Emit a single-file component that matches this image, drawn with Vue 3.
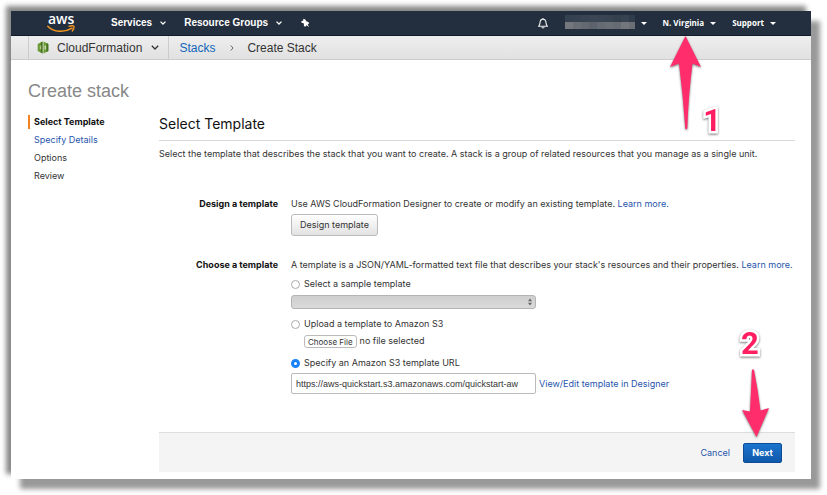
<script setup>
import { ref } from 'vue'

const steps = [
  { label: 'Select Template', state: 'current' },
  { label: 'Specify Details', state: 'link' },
  { label: 'Options', state: 'plain' },
  { label: 'Review', state: 'plain' },
]
const source = ref('url')
const templateUrl = ref('https://aws-quickstart.s3.amazonaws.com/quickstart-aw')
const topRow = ['#344151', '#36424f', '#384453', '#3b4655', '#3a4553', '#394452', '#35404f', '#384351', '#303c4b']
const lowRow = ['#74777c', '#6a6f76', '#656a72', '#5c636c', '#666b73', '#6a6e75', '#666b73', '#73767b', '#6a6e75']
</script>

<template>
  <div class="page">
    <div class="window">
      <header class="topbar">
        <a href="#" class="logo" aria-label="AWS home">
          <span class="logo-word">aws</span>
          <svg class="smile" viewBox="0 0 28 8" aria-hidden="true">
            <path d="M0.8 1.2 C7 7.6 17.500 7.800 25 3.200" fill="none" stroke="#f7981f" stroke-width="1.500" stroke-linecap="round" />
            <path d="M22 1.400 C24 0.700 26 0.600 26.800 1.200 C27.300 2.200 26.600 4.400 25.300 6" fill="none" stroke="#f7981f" stroke-width="1.300" stroke-linecap="round" />
          </svg>
        </a>
        <nav class="menus">
          <button type="button" class="menu">Services
            <svg class="chev" viewBox="0 0 6 4" aria-hidden="true"><path d="M0.500 0.600 L3 3 L5.500 0.600" /></svg>
          </button>
          <button type="button" class="menu">Resource Groups
            <svg class="chev" viewBox="0 0 6 4" aria-hidden="true"><path d="M0.500 0.600 L3 3 L5.500 0.600" /></svg>
          </button>
          <button type="button" class="menu pin" aria-label="Pin">
            <svg viewBox="0 0 10 10" aria-hidden="true"><path d="M3.400 0.800 L5.300 1.500 L6.300 3.300 L8.800 4.300 L8.900 5.800 L7.700 6.200 L9 9 L6.400 7.300 L5.400 8.700 L3.900 8 L3.900 5.600 L1.300 4.600 L1.200 3.400 L3.200 2.600 Z" fill="#fff" /></svg>
          </button>
        </nav>
        <div class="account">
          <button type="button" class="bell" aria-label="Notifications">
            <svg viewBox="0 0 12 12" aria-hidden="true">
              <path d="M1.500 9.300 C3.300 7.800 2.800 6.300 3.200 4.300 C3.500 2.900 4.400 2.100 6 2.100 C7.600 2.100 8.500 2.900 8.800 4.300 C9.200 6.300 8.700 7.800 10.500 9.300 Z M6 2 V0.900 M4.900 10 C5.100 11.300 6.900 11.300 7.100 10" fill="none" stroke="#f0f1f2" stroke-width="1.100" stroke-linejoin="round" />
            </svg>
          </button>
          <button type="button" class="user" aria-label="Account">
            <svg class="redacted" viewBox="0 0 70 14" shape-rendering="crispEdges" aria-hidden="true">
              <rect v-for="(c, i) in topRow" :key="'t' + i" :x="i * 8" y="0" width="8" height="7" :fill="c" />
              <rect v-for="(c, i) in lowRow" :key="'l' + i" :x="i * 8" y="7" width="8" height="7" :fill="c" />
            </svg>
            <i class="caret"></i>
          </button>
          <button type="button" class="small-menu">N. Virginia <i class="caret"></i></button>
          <button type="button" class="small-menu">Support <i class="caret"></i></button>
        </div>
      </header>

      <nav class="crumbs">
        <button type="button" class="service">
          <svg class="cf" viewBox="0 0 12 13" aria-hidden="true">
            <path d="M5.500 0.500 V12.500 L0.700 10 V3 Z" fill="#6a9a33" />
            <path d="M5.500 0.500 V12.500 L3.800 11.600 V8.500 H2.600 V4.500 H3.800 V1.400 Z" fill="#466f1f" />
            <path d="M2.600 4.500 H4.200 V8.500 H2.600 Z" fill="#a9c585" />
            <path d="M6.500 0.500 V12.500 L11.300 10 V3 Z" fill="#6a9a33" />
            <path d="M9.600 2.100 L11.300 3 V10 L9.600 10.900 Z" fill="#466f1f" />
            <path d="M7.600 4.500 H8.900 V8.500 H7.600 Z" fill="#d5e3c2" />
          </svg>
          CloudFormation
          <svg class="chev dark" viewBox="0 0 8 5" aria-hidden="true"><path d="M0.800 0.800 L4 4 L7.200 0.800" /></svg>
        </button>
        <a href="#" class="crumb">Stacks</a>
        <svg class="sep" viewBox="0 0 4 6" aria-hidden="true"><path d="M0.800 0.500 L3 3 L0.800 5.500" /></svg>
        <span>Create Stack</span>
      </nav>

      <div class="content">
        <h1>Create stack</h1>
        <div class="columns">
          <ol class="steps">
            <li v-for="s in steps" :key="s.label" :class="s.state">
              <a v-if="s.state === 'link'" href="#">{{ s.label }}</a>
              <template v-else>{{ s.label }}</template>
            </li>
          </ol>

          <main>
            <h2>Select Template</h2>
            <p class="intro">Select the template that describes the stack that you want to create. A stack is a group of related resources that you manage as a single unit.</p>

            <section class="row">
              <h3>Design a template</h3>
              <div>
                <p>Use AWS CloudFormation Designer to create or modify an existing template. <a href="#">Learn more.</a></p>
                <button type="button" class="btn">Design template</button>
              </div>
            </section>

            <section class="row">
              <h3>Choose a template</h3>
              <div class="choices">
                <p>A template is a JSON/YAML-formatted text file that describes your stack's resources and their properties. <a href="#">Learn more.</a></p>
                <label class="option"><input v-model="source" type="radio" name="source" value="sample">Select a sample template</label>
                <div class="select-wrap">
                  <select aria-label="Sample template"></select>
                  <svg viewBox="0 0 6 10" aria-hidden="true"><path d="M0.500 4 L3 0.500 L5.500 4 Z M0.500 6 L3 9.500 L5.500 6 Z" fill="#666" /></svg>
                </div>
                <label class="option"><input v-model="source" type="radio" name="source" value="upload">Upload a template to Amazon S3</label>
                <div class="file">
                  <label class="file-btn">Choose File<input type="file"></label>
                  <span>no file selected</span>
                </div>
                <label class="option"><input v-model="source" type="radio" name="source" value="url">Specify an Amazon S3 template URL</label>
                <div class="url">
                  <input v-model="templateUrl" type="text" aria-label="Amazon S3 template URL">
                  <a href="#">View/Edit template in Designer</a>
                </div>
              </div>
            </section>

            <footer>
              <a href="#">Cancel</a>
              <button type="button" class="next">Next</button>
            </footer>
          </main>
        </div>
      </div>

      <div class="callout one">
        <svg viewBox="0 0 34 96" aria-hidden="true"><path d="M16.500 1 L32 32 L23.500 28.500 Q19.500 60 18.300 93.500 Q17.300 95 16.300 93.500 Q14 60 10 28.500 L1 32 Z" fill="#ff2d6b" /></svg>
        <b>1</b>
      </div>
      <div class="callout two">
        <b>2</b>
        <svg viewBox="0 0 30 70" aria-hidden="true"><path d="M15.500 69 L1 42 L9 43.500 Q10 22 11 2 Q12 0.500 13 2 Q17 22 19.500 42.500 L28 40 Z" fill="#ff2d6b" /></svg>
      </div>
    </div>
  </div>
</template>

<style>
body { margin: 0; background: #fff; }
</style>

<style scoped>
* { box-sizing: border-box; }
.page {
  min-height: 100vh;
  padding: 11px 16px 16px 11px;
  overflow: hidden;
  font: 10px/12px "Liberation Sans", Arial, Helvetica, sans-serif;
  color: #333;
}
.window {
  position: relative;
  background: #fff;
  box-shadow: -5px -5px 5px #888, 9px 10px 5px #999;
}
button, input, select { font: inherit; color: inherit; margin: 0; }
a { color: #1f55ab; text-decoration: none; }
h1, h2, h3, p, ol { margin: 0; padding: 0; }
svg { display: block; flex: none; }

.topbar {
  display: flex;
  align-items: center;
  height: 25px;
  padding: 0 35px 0 36px;
  background: #232f3e;
  border-bottom: 1px solid #101c2b;
}
.topbar button { padding: 0; border: 0; background: none; color: #fff; white-space: nowrap; }
.logo { width: 64px; color: #fff; }
.logo-word { display: block; font: 14px/12px "Open Sans", sans-serif; font-weight: 600; padding-left: 1px; }
.smile { width: 28px; height: 8px; }
.menus { display: flex; flex: 1; gap: 18px; }
.menu { display: flex; align-items: center; gap: 8px; font-weight: bold !important; }
.chev { width: 6px; height: 4px; fill: none; stroke: #fff; stroke-width: 1.3; }
.chev.dark { width: 8px; height: 5px; stroke: #333; }
.pin svg { width: 10px; height: 10px; }
.account { display: flex; align-items: center; gap: 16px; }
.bell svg { width: 12px; height: 12px; }
.user, .small-menu { display: flex; align-items: center; gap: 6px; }
.small-menu { font-family: "Open Sans", sans-serif !important; font-size: 8px !important; font-weight: 700 !important; }
.redacted { width: 70px; height: 14px; margin-bottom: 2px; }
.caret { border: 3px solid transparent; border-top-color: #fff; border-bottom: 0; }

.crumbs {
  display: flex;
  align-items: center;
  height: 24px;
  padding-left: 17px;
  background: linear-gradient(#eee, #e1e1e1);
  border-bottom: 1px solid #ccc;
  font-size: 12px;
}
.service {
  display: flex;
  align-items: center;
  align-self: stretch;
  gap: 8px;
  padding: 0 9px 0 8px;
  border: solid #ccc;
  border-width: 0 1px;
  background: none;
}
.service .chev { margin: 0 0 0 1px; }
.cf { width: 12px; height: 13px; }
.crumb { margin-left: 10px; color: #1166bb; }
.sep { width: 4px; height: 6px; margin: 0 13px 0 15px; fill: none; stroke: #666; }

.content { padding: 20px 16px 7px 17px; }
h1 { font-size: 18px; line-height: 22px; font-weight: normal; color: #888; }
.columns {
  display: grid;
  grid-template-columns: 131px minmax(0, 1fr);
  font-family: Inter, "Liberation Sans", sans-serif;
  font-size: 9px;
}
.steps { list-style: none; padding-top: 13px; }
.steps li { height: 14px; margin-bottom: 4px; padding-left: 4px; border-left: 2px solid transparent; line-height: 14px; }
.steps .current { border-color: #f58220; font-weight: bold; color: #111; }
main { padding-top: 13px; }
h2 { padding-bottom: 7px; border-bottom: 1px solid #d8d8d8; font-size: 14px; line-height: 18px; font-weight: normal; color: #111; }
.intro { padding-top: 7px; margin-bottom: 38px; }
.row { display: grid; grid-template-columns: 119px minmax(0, 1fr); column-gap: 13px; margin-bottom: 23px; }
h3 { font-size: 9px; line-height: 12px; text-align: right; color: #111; }
.btn {
  height: 22px;
  margin-top: 4px;
  padding: 0 8px;
  border: 1px solid #bbb;
  border-radius: 3px;
  background: linear-gradient(#fff, #e2e2e2);
}
.option { display: flex; align-items: center; gap: 4px; height: 12px; }
.option input {
  appearance: none;
  width: 9px;
  height: 9px;
  border: 1px solid #aaa;
  border-radius: 50%;
  background: #fff;
}
.option input:checked { border: 3px solid #1a82f7; }
.choices p { margin-bottom: 7px; }
.select-wrap { position: relative; width: 245px; margin: 5px 0 9px; }
.select-wrap select {
  display: block;
  appearance: none;
  width: 100%;
  height: 14px;
  padding: 0;
  border: 1px solid #b4b4b4;
  border-radius: 3px;
  background: linear-gradient(#cfcfcf, #dadada);
}
.select-wrap svg { position: absolute; right: 3px; top: 3px; width: 6px; height: 8px; pointer-events: none; }
.file { display: flex; gap: 3px; margin: 5px 0 9px 13px; }
.file-btn {
  position: relative;
  height: 13px;
  padding: 0 3px;
  border: 1px solid #bbb;
  border-radius: 3px;
  overflow: hidden;
  font-size: 8px;
  line-height: 12px;
}
.file-btn input { position: absolute; inset: 0; width: 100%; opacity: 0; }
.url { display: flex; align-items: center; gap: 3px; margin-top: 4px; }
.url input {
  width: 245px;
  height: 21px;
  padding: 0 4px;
  border: 1px solid #bbb;
  border-radius: 2px;
  background: #fff;
  font-family: "Liberation Sans", Arial, sans-serif;
}
footer {
  display: flex;
  align-items: center;
  justify-content: flex-end;
  gap: 13px;
  height: 40px;
  margin-top: 38px;
  padding: 0 13px;
  border-top: 1px solid #ddd;
  background: #f4f4f4;
}
.next {
  width: 39px;
  height: 20px;
  padding: 0;
  border: 1px solid #0e4d96;
  border-radius: 2px;
  background: linear-gradient(#1c74cd, #0f58ab);
  color: #fff;
  font-weight: bold;
}

.callout { position: absolute; display: flex; pointer-events: none; }
.callout svg { filter: drop-shadow(0 1px 1px #777); }
.callout b {
  color: #ff1f60;
  font-family: Roboto, sans-serif;
  font-size: 31px;
  line-height: 30px;
  paint-order: stroke;
  -webkit-text-stroke: 5px #fff;
  filter: drop-shadow(0 1px 1px #777);
}
.one { right: 90px; top: 24px; align-items: flex-end; }
.one svg { width: 34px; height: 96px; margin-bottom: 5px; }
.two { right: 40px; top: 318px; flex-direction: column; }
.two svg { width: 30px; height: 70px; margin-top: 9px; }
</style>
